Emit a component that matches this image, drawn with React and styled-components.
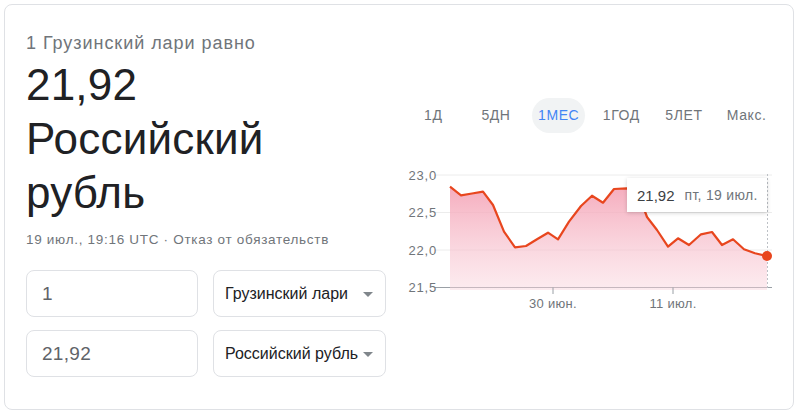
import React from 'react';
import styled, { createGlobalStyle } from "styled-components";

const ranges = ["1Д", "5ДН", "1МЕС", "1ГОД", "5ЛЕТ", "Макс."];

// chart points in svg coordinates (svg sits at x 402, y 160)
const points = [
    [48, 26.7], [59, 35.3], [70, 33.5], [81, 31.7], [91, 45], [102, 71.7], [113, 87.3],
    [124, 86], [135, 79.3], [146, 72.7], [156, 79.3], [167, 61.7], [179, 46],
    [190, 35.7], [201, 42.7], [212, 29], [224.7, 28.3], [235, 30], [245, 57],
    [255, 70], [266, 86.7], [276, 78.3], [287, 85], [299, 74.3], [310, 72],
    [320, 85], [331, 79.3], [342, 89.3], [353, 93.3], [365, 96],
];

const gridLines = [
    { y: 15, label: "23,0" },
    { y: 52.5, label: "22,5" },
    { y: 90, label: "22,0" },
    { y: 127.5, label: "21,5" },
];

function App() {
    const line = points.map((p) => p.join(",")).join(" ");
    const area = `48,130 ${line} 365,130`;
    const last = points[points.length - 1];

    return (
        <>
            <GlobalStyle />
            <Card>
                <Left>
                    <Subtitle>1 Грузинский лари равно</Subtitle>
                    <BigValue>
                        21,92<br />Российский<br />рубль
                    </BigValue>
                    <Meta>19 июл., 19:16 UTC · Отказ от обязательств</Meta>
                    <Rows>
                        <Row>
                            <Field>1</Field>
                            <Select>Грузинский лари<Arrow /></Select>
                        </Row>
                        <Row>
                            <Field>21,92</Field>
                            <Select>Российский рубль<Arrow /></Select>
                        </Row>
                    </Rows>
                </Left>
                <Right>
                    <Tabs>
                        {ranges.map((r) => (
                            <Tab key={r} $active={r === "1МЕС"}><span>{r}</span></Tab>
                        ))}
                    </Tabs>
                    <ChartBox>
                        <svg width="376" height="155" viewBox="0 0 376 155">
                            <defs>
                                <linearGradient id="fill" x1="0" y1="0" x2="0" y2="1">
                                    <stop offset="0" stopColor="#f4a3b6" stopOpacity="0.9" />
                                    <stop offset="1" stopColor="#f9d3dc" stopOpacity="0.45" />
                                </linearGradient>
                            </defs>
                            {gridLines.map((g, i) => (
                                <g key={g.label}>
                                    <line x1="33" x2="370" y1={g.y} y2={g.y}
                                        stroke={i === 3 ? "#9aa0a6" : "#ececec"} strokeWidth="1" />
                                    <YLabel x="35" y={g.y + 4.5} textAnchor="end">{g.label}</YLabel>
                                </g>
                            ))}
                            <polygon points={area} fill="url(#fill)" />
                            <line x1="365.5" x2="365.5" y1="14" y2="128" stroke="#bdc1c6" strokeDasharray="2,2" />
                            <polyline points={line} fill="none" stroke="#e8461e" strokeWidth="2.2" strokeLinejoin="round" />
                            <circle cx={last[0]} cy={last[1]} r="5" fill="#e8461e" />
                            {[[151, "30 июн."], [271, "11 июл."]].map(([x, t]) => (
                                <g key={t}>
                                    <line x1={x} x2={x} y1="127.5" y2="134" stroke="#9aa0a6" />
                                    <XLabel x={x} y="148" textAnchor="middle">{t}</XLabel>
                                </g>
                            ))}
                        </svg>
                        <Tooltip>
                            <b>21,92</b>
                            <span>пт, 19 июл.</span>
                        </Tooltip>
                    </ChartBox>
                </Right>
            </Card>
        </>
    );
}

const GlobalStyle = createGlobalStyle`
    body {
        margin: 0;
        background: #fff;
        font-family: "Liberation Sans", Arial, sans-serif;
    }
`

const Card = styled.div`
    box-sizing: border-box;
    margin: 4px 0 0 4px;
    width: 790px;
    height: 406px;
    border: 1px solid #dfe1e5;
    border-radius: 8px;
    padding: 26px 15px 0 21px;
    display: grid;
    grid-template-columns: 360px 376px;
    column-gap: 16px;
`

const Left = styled.div`
    display: flex;
    flex-direction: column;
`

const Subtitle = styled.div`
    font-size: 18px;
    letter-spacing: 0.95px;
    line-height: 24px;
    color: #70757a;
    white-space: nowrap;
`

const BigValue = styled.div`
    margin-top: 3px;
    font-size: 44px;
    letter-spacing: 0.2px;
    line-height: 54px;
    color: #202124;
`

const Meta = styled.div`
    margin-top: 12px;
    font-size: 13.5px;
    letter-spacing: 0.7px;
    line-height: 16px;
    color: #70757a;
    white-space: nowrap;
`

const Rows = styled.div`
    margin-top: 22px;
    display: flex;
    flex-direction: column;
    gap: 13px;
`

const Row = styled.div`
    display: grid;
    grid-template-columns: 172px 173px;
    column-gap: 15px;
`

const Box = styled.div`
    box-sizing: border-box;
    height: 47px;
    border: 1px solid #dfe1e5;
    border-radius: 8px;
    display: flex;
    align-items: center;
`

const Field = styled(Box)`
    padding-left: 15px;
    font-size: 19px;
    letter-spacing: 0.3px;
    color: #5f6368;
`

const Select = styled(Box)`
    padding: 0 12px 0 11px;
    justify-content: space-between;
    font-size: 16px;
    color: #202124;
    white-space: nowrap;
`

const Arrow = styled.i`
    width: 0;
    height: 0;
    border-left: 5px solid transparent;
    border-right: 5px solid transparent;
    border-top: 5px solid #80868b;
    margin-top: 1px;
`

const Right = styled.div`
    display: flex;
    flex-direction: column;
`

const Tabs = styled.div`
    margin-top: 67px;
    display: grid;
    grid-template-columns: repeat(6, 1fr);
`

const Tab = styled.div`
    display: flex;
    justify-content: center;
    span {
        height: 35px;
        line-height: 35px;
        padding: 0 6px;
        border-radius: 18px;
        font-size: 14px;
        letter-spacing: 0.6px;
        color: ${(p) => (p.$active ? "#4285f4" : "#70757a")};
        background: ${(p) => (p.$active ? "#f1f3f4" : "transparent")};
    }
`

const YLabel = styled.text`
    font-family: "Liberation Sans", Arial, sans-serif;
    font-size: 13px;
    letter-spacing: 0.8px;
    fill: #70757a;
`

const XLabel = styled(YLabel)`
    letter-spacing: 0.3px;
`

const ChartBox = styled.div`
    position: relative;
    margin-top: 27px;
    svg {
        display: block;
    }
`

const Tooltip = styled.div`
    position: absolute;
    left: 225px;
    top: 18px;
    height: 34px;
    padding: 0 9px 0 10px;
    display: flex;
    align-items: center;
    gap: 10px;
    background: #fff;
    box-shadow: 0 1px 4px rgba(0, 0, 0, 0.18);
    b {
        font-weight: normal;
        font-size: 15px;
        color: #3c4043;
    }
    span {
        font-size: 14px;
        letter-spacing: 0.3px;
        color: #70757a;
    }
`

export default App
